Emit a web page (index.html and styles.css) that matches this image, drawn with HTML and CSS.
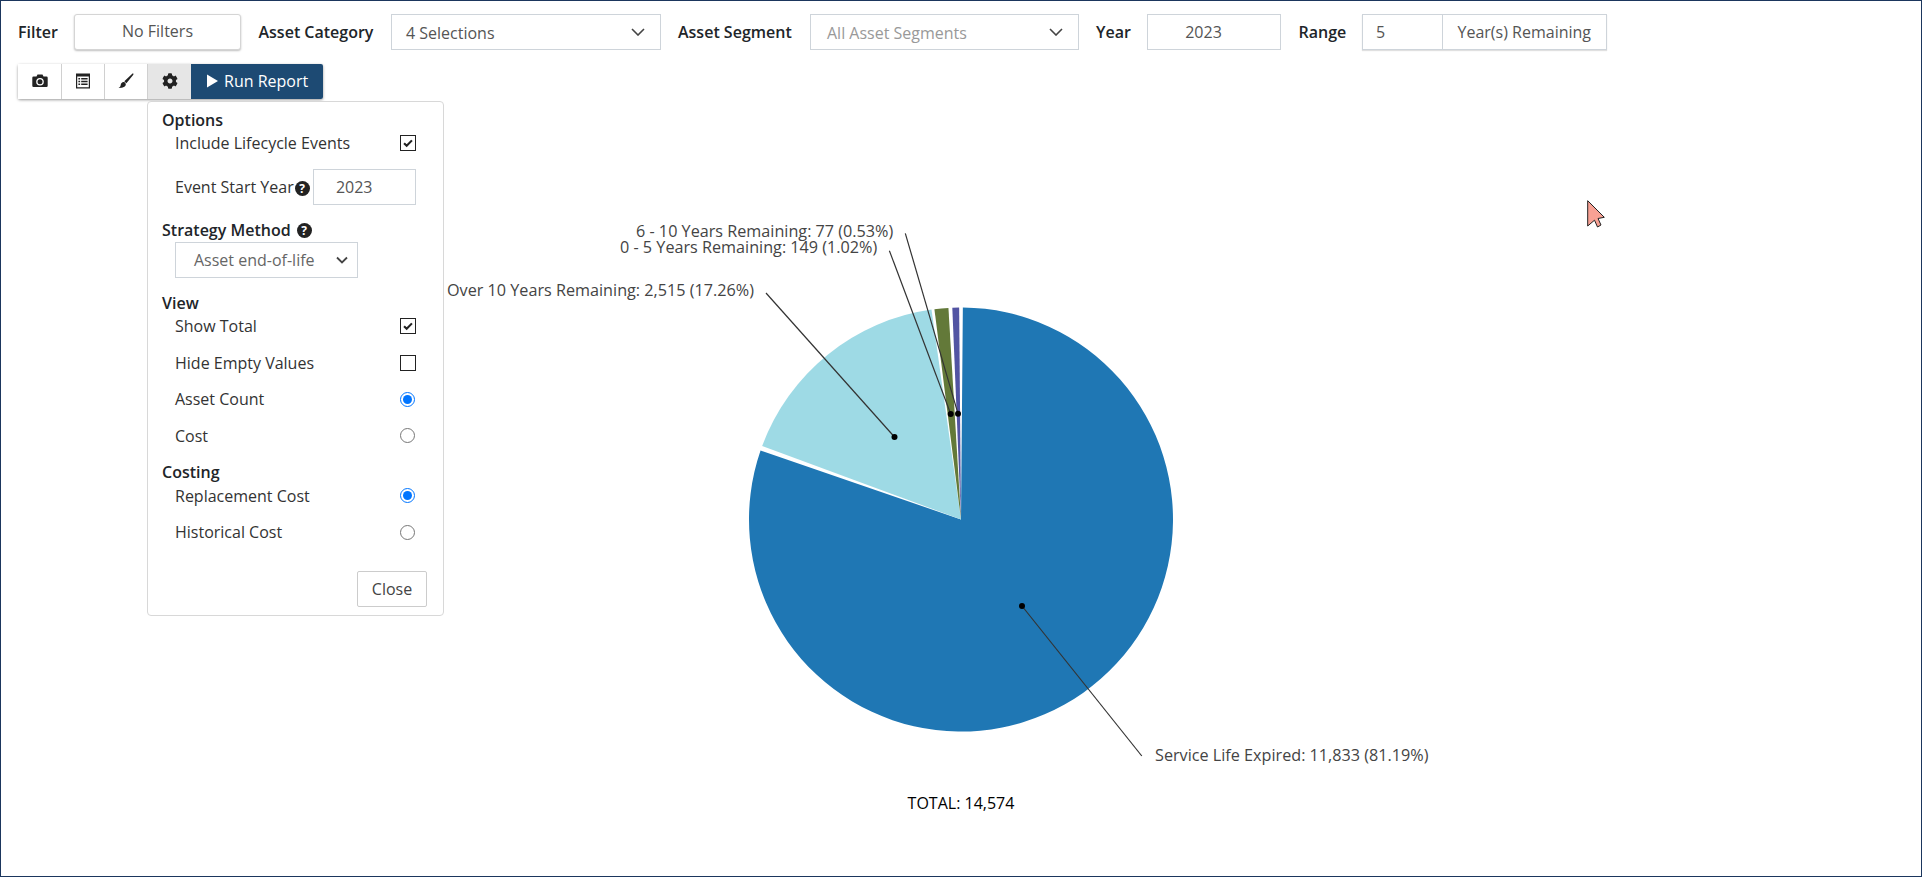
FILE: index.html
```html
<!DOCTYPE html>
<html lang="en">
<head>
<meta charset="utf-8">
<title>Asset Report</title>
<link rel="stylesheet" href="styles.css">
</head>
<body>
<div class="frame">
  <div class="filters">
    <span class="label w-filter">Filter</span>
    <div class="control btn-filter">No Filters</div>
    <span class="label w-cat">Asset Category</span>
    <div class="control select sel-cat"><span>4 Selections</span>
      <svg class="chev" viewBox="0 0 14 8"><path d="M1 1l6 6 6-6"/></svg></div>
    <span class="label w-seg">Asset Segment</span>
    <div class="control select sel-seg placeholder"><span>All Asset Segments</span>
      <svg class="chev" viewBox="0 0 14 8"><path d="M1 1l6 6 6-6"/></svg></div>
    <span class="label w-year">Year</span>
    <div class="control year">2023</div>
    <span class="label w-range">Range</span>
    <div class="control range">
      <span class="range-num">5</span>
      <span class="range-unit">Year(s) Remaining</span>
    </div>
  </div>

  <div class="toolbar">
    <div class="tool">
      <svg class="ico" viewBox="0 0 16 16"><path fill-rule="evenodd" d="M1.500 3.500h3l1-2h5l1 2h3a1.200 1.200 0 0 1 1.200 1.200v8.100a1.200 1.200 0 0 1-1.200 1.200h-13A1.200 1.200 0 0 1 .3 12.800V4.700A1.200 1.200 0 0 1 1.500 3.500zM8 5a3.800 3.800 0 1 0 0 7.600A3.800 3.800 0 0 0 8 5zm0 1.300a2.500 2.500 0 1 1 0 5 2.500 2.500 0 0 1 0-5z"/></svg>
    </div>
    <div class="tool">
      <svg class="ico" viewBox="0 0 16 16"><path fill-rule="evenodd" d="M1 .5h14v15H1zM2.200 3.500v10.800h11.600V3.500zM3.400 5h1.700v1.500H3.400zm2.800 0h6.400v1.500H6.200zM3.400 7.800h1.700v1.500H3.400zm2.800 0h6.400v1.500H6.200zM3.400 10.600h1.700v1.500H3.400zm2.800 0h6.400v1.500H6.200z"/></svg>
    </div>
    <div class="tool">
      <svg class="ico" viewBox="0 0 16 16"><path d="M15.200.6c.5.400.3 1-.1 1.500L8.400 10.200 6.300 8.300 14 .9c.4-.4.800-.6 1.200-.3zM5.700 9c1.300.2 2.200 1.200 2.100 2.600-.2 2.400-3.500 3.700-7.300 3.300 1.400-.8 2-1.600 2.200-3 .2-1.500 1.400-3 3-2.900z"/></svg>
    </div>
    <div class="tool tool-active">
      <svg class="ico" viewBox="0 0 512 512"><path d="M487.400 315.700l-42.600-24.600c4.300-23.200 4.300-47 0-70.200l42.600-24.600c4.900-2.800 7.100-8.600 5.500-14-11.100-35.600-30-67.800-54.700-94.600-3.800-4.100-10-5.100-14.800-2.300L380.800 110c-17.900-15.400-38.500-27.300-60.800-35.100V25.800c0-5.600-3.900-10.500-9.400-11.700-36.700-8.200-74.300-7.800-109.200 0-5.500 1.200-9.400 6.100-9.400 11.700V75c-22.200 7.900-42.800 19.800-60.800 35.100L88.700 85.500c-4.900-2.800-11-1.900-14.800 2.300-24.700 26.700-43.600 58.900-54.700 94.600-1.700 5.400.6 11.200 5.500 14L67.300 221c-4.300 23.200-4.300 47 0 70.200l-42.600 24.600c-4.900 2.800-7.100 8.600-5.500 14 11.100 35.600 30 67.800 54.700 94.600 3.800 4.100 10 5.100 14.800 2.300l42.600-24.600c17.900 15.400 38.500 27.300 60.800 35.100v49.200c0 5.600 3.900 10.500 9.400 11.700 36.700 8.200 74.300 7.800 109.200 0 5.500-1.200 9.400-6.100 9.400-11.700v-49.200c22.200-7.900 42.800-19.800 60.800-35.100l42.600 24.600c4.900 2.800 11 1.900 14.800-2.300 24.700-26.700 43.600-58.900 54.700-94.600 1.500-5.500-.7-11.300-5.600-14.100zM256 336c-44.100 0-80-35.900-80-80s35.900-80 80-80 80 35.900 80 80-35.900 80-80 80z"/></svg>
    </div>
    <div class="run">
      <svg class="play" viewBox="0 0 12 14"><path d="M0 0l12 7-12 7z"/></svg>
      <span>Run Report</span>
    </div>
  </div>

  <svg class="chart" viewBox="1 99 1920 776">
    <path class="s-blue" d="M961 519.500L962.850 307.510A212 212 0 1 1 760.550 450.480Z"/>
    <path class="s-light" d="M961 519.500L762.160 445.950A212 212 0 0 1 931.490 309.560Z"/>
    <path class="s-green" d="M961 519.500L934.430 309.170A212 212 0 0 1 948.430 307.880Z"/>
    <path class="s-purple" d="M961 519.500L952.310 307.680A212 212 0 0 1 959.150 307.510Z"/>
    <path class="lead" d="M1022 606L1141.800 756"/>
    <path class="lead" d="M894.500 437L766 293"/>
    <path class="lead" d="M950.700 414L889.400 250.700"/>
    <path class="lead" d="M958 413.700L905.300 233.300"/>
    <circle class="dot" cx="1022" cy="606" r="3"/>
    <circle class="dot" cx="894.500" cy="437" r="3"/>
    <circle class="dot" cx="950.700" cy="414" r="3"/>
    <circle class="dot" cx="958" cy="413.700" r="3"/>
    <text class="lbl" x="636" y="237">6 - 10 Years Remaining: 77 (0.53%)</text>
    <text class="lbl" x="620" y="253">0 - 5 Years Remaining: 149 (1.02%)</text>
    <text class="lbl" x="447" y="296">Over 10 Years Remaining: 2,515 (17.26%)</text>
    <text class="lbl" x="1155" y="761">Service Life Expired: 11,833 (81.19%)</text>
    <text class="total" x="961" y="809">TOTAL: 14,574</text>
  </svg>

  <div class="popover">
    <div class="heading">Options</div>
    <div class="row row-first"><span>Include Lifecycle Events</span><span class="check"><svg viewBox="0 0 16 16"><path d="M3.500 8.200l3 3 6-6.200"/></svg></span></div>
    <div class="row-event">
      <span>Event Start Year</span><span class="help help-event">?</span>
      <div class="pop-input">2023</div>
    </div>
    <div class="heading heading-strategy">Strategy Method <span class="help">?</span></div>
    <div class="pop-select"><span>Asset end-of-life</span>
      <svg class="chev-small" viewBox="0 0 12 8"><path d="M1 1.500l5 5 5-5"/></svg></div>
    <div class="heading heading-view">View</div>
    <div class="row"><span>Show Total</span><span class="check"><svg viewBox="0 0 16 16"><path d="M3.500 8.200l3 3 6-6.200"/></svg></span></div>
    <div class="row"><span>Hide Empty Values</span><span class="check"></span></div>
    <div class="row"><span>Asset Count</span><input class="radio" type="radio" name="view" checked></div>
    <div class="row"><span>Cost</span><input class="radio" type="radio" name="view"></div>
    <div class="heading heading-costing">Costing</div>
    <div class="row"><span>Replacement Cost</span><input class="radio" type="radio" name="cost" checked></div>
    <div class="row row-last"><span>Historical Cost</span><input class="radio" type="radio" name="cost"></div>
    <div class="pop-foot"><div class="close">Close</div></div>
  </div>

  <svg class="cursor" viewBox="0 0 18 28"><path d="M.7.700L17.300 17.300 11 18.500l3 6.500-3.500 2-3-6.800-6.800 5.800z"/></svg>
</div>
</body>
</html>
```

FILE: styles.css
```css
* { box-sizing: border-box; }
html, body { margin: 0; padding: 0; background: #fff; }
body { font-family: "Open Sans", "Liberation Sans", sans-serif; font-size: 16px; color: #333; }

.frame {
  position: relative;
  width: 1922px;
  height: 877px;
  border: 1px solid #1b365d;
  overflow: hidden;
}

/* top filter row */
.filters {
  display: flex;
  align-items: center;
  height: 36px;
  margin: 13px 0 0 17px;
}
.label { font-weight: 600; color: #212529; white-space: nowrap; }
.w-filter { width: 56px; }
.w-cat { width: 132.500px; margin-left: 17.500px; }
.w-seg { width: 132px; margin-left: 17px; }
.w-year { width: 50.500px; margin-left: 17px; }
.w-range { width: 63.500px; margin-left: 18px; }
.control {
  height: 36px;
  border: 1px solid #ced4da;
  background: #fff;
  color: #555;
  display: flex;
  align-items: center;
}
.btn-filter {
  width: 167px;
  justify-content: center;
  border-color: #d5d5d5;
  border-radius: 3px;
  padding-bottom: 3px;
  box-shadow: 0 1px 2px rgba(0,0,0,.25);
}
.select { justify-content: space-between; padding: 0 15px 0 14px; }
.select span { padding-top: 1px; }
.sel-cat { width: 270px; }
.sel-seg { width: 269px; padding-left: 16px; }
.placeholder { color: #999; }
.chev { width: 14px; height: 8px; fill: none; stroke: #444; stroke-width: 1.600; }
.year { width: 134px; justify-content: center; padding-right: 20px; }
.range { width: 244.500px; box-shadow: 0 1px 1px rgba(0,0,0,.12); }
.range-num { width: 79px; padding-left: 13px; }
.range-unit {
  flex: 1;
  height: 100%;
  border-left: 1px solid #ced4da;
  display: flex;
  align-items: center;
  justify-content: center;
}

/* tool buttons */
.toolbar {
  display: flex;
  width: 305px;
  height: 35px;
  margin: 14px 0 0 17px;
  border-radius: 2px;
  box-shadow: 0 1px 3px rgba(0,0,0,.4);
}
.tool {
  width: 43px;
  display: flex;
  align-items: center;
  justify-content: center;
  background: #fff;
  border-right: 1px solid #d0d0d0;
  padding-bottom: 2px;
}
.tool:first-child { width: 44px; }
.tool-active { background: #e6e6e6; border-right: 0; }
.ico { width: 16px; height: 16px; fill: #222; }
.run {
  flex: 1;
  display: flex;
  align-items: center;
  gap: 6px;
  padding: 0 0 2px 16px;
  background: #1d4a73;
  color: #fff;
  font-size: 16px;
  border-radius: 0 2px 2px 0;
}
.play { width: 11px; height: 14px; fill: #fff; }

/* pie chart */
.chart { display: block; width: 1920px; height: 776px; }
.s-blue { fill: #1f77b4; }
.s-light { fill: #9edae5; }
.s-green { fill: #637939; }
.s-purple { fill: #5254a3; }
.lead { fill: none; stroke: #333; stroke-width: 1.200; }
.dot { fill: #000; }
.lbl { font-size: 16.200px; fill: #444; }
.total { font-size: 16px; fill: #000; text-anchor: middle; }

/* options popover */
.popover {
  position: absolute;
  top: 100px;
  left: 146px;
  width: 297px;
  height: 514.500px;
  padding: 8px 16px 8px 14px;
  background: #fff;
  border: 1px solid #d8d8d8;
  border-radius: 4px;
}
.heading { height: 20px; line-height: 20px; font-weight: 600; color: #212529; white-space: nowrap; display: flex; align-items: center; gap: 6px; }
.heading-strategy { margin-top: 15px; }
.heading-view { margin-top: 15px; }
.heading-costing { margin-top: -.5px; }
.row {
  display: flex;
  justify-content: space-between;
  align-items: center;
  height: 20px;
  margin: 3px 11px 16.500px 13px;
  line-height: 20px;
}
.row + .row { margin-top: 0; }
.heading-costing + .row { margin-top: 4px; }
.row-first { margin-bottom: 16px; }
.row-last { margin-bottom: 29px; }
.check {
  width: 16px;
  height: 16px;
  border: 1px solid #222;
  background: #fff;
  display: block;
}
.check svg { display: block; width: 14px; height: 14px; fill: none; stroke: #222; stroke-width: 2.400; }
.radio { width: 15px; height: 15px; margin: 0 1px 0 0; accent-color: #0075ff; }
.row-event { display: flex; align-items: center; height: 36px; margin-left: 13px; }
.help {
  width: 15px;
  height: 15px;
  border-radius: 50%;
  background: #222;
  color: #fff;
  font-size: 12px;
  font-weight: 700;
  line-height: 15px;
  text-align: center;
  display: inline-block;
}
.help-event { margin: 3px 3px 0 1px; flex: none; }
.pop-input {
  width: 103px;
  height: 36px;
  border: 1px solid #ced4da;
  color: #555;
  display: flex;
  align-items: center;
  justify-content: center;
  padding-right: 20px;
  flex: none;
}
.pop-select {
  display: flex;
  align-items: center;
  justify-content: space-between;
  width: 183px;
  height: 36px;
  margin: 2px 0 0 13px;
  padding: 0 9px 0 18px;
  border: 1px solid #ced4da;
  color: #666;
}
.chev-small { width: 12px; height: 8px; fill: none; stroke: #444; stroke-width: 1.800; }
.pop-foot { display: flex; justify-content: flex-end; }
.close {
  width: 70px;
  height: 36px;
  border: 1px solid #ccc;
  border-radius: 2px;
  color: #444;
  display: flex;
  align-items: center;
  justify-content: center;
}

/* mouse pointer in the capture */
.cursor {
  position: absolute;
  top: 199px;
  left: 1586px;
  width: 18px;
  height: 28px;
  fill: #f8a194;
  stroke: #222;
  stroke-width: 1;
}
```
